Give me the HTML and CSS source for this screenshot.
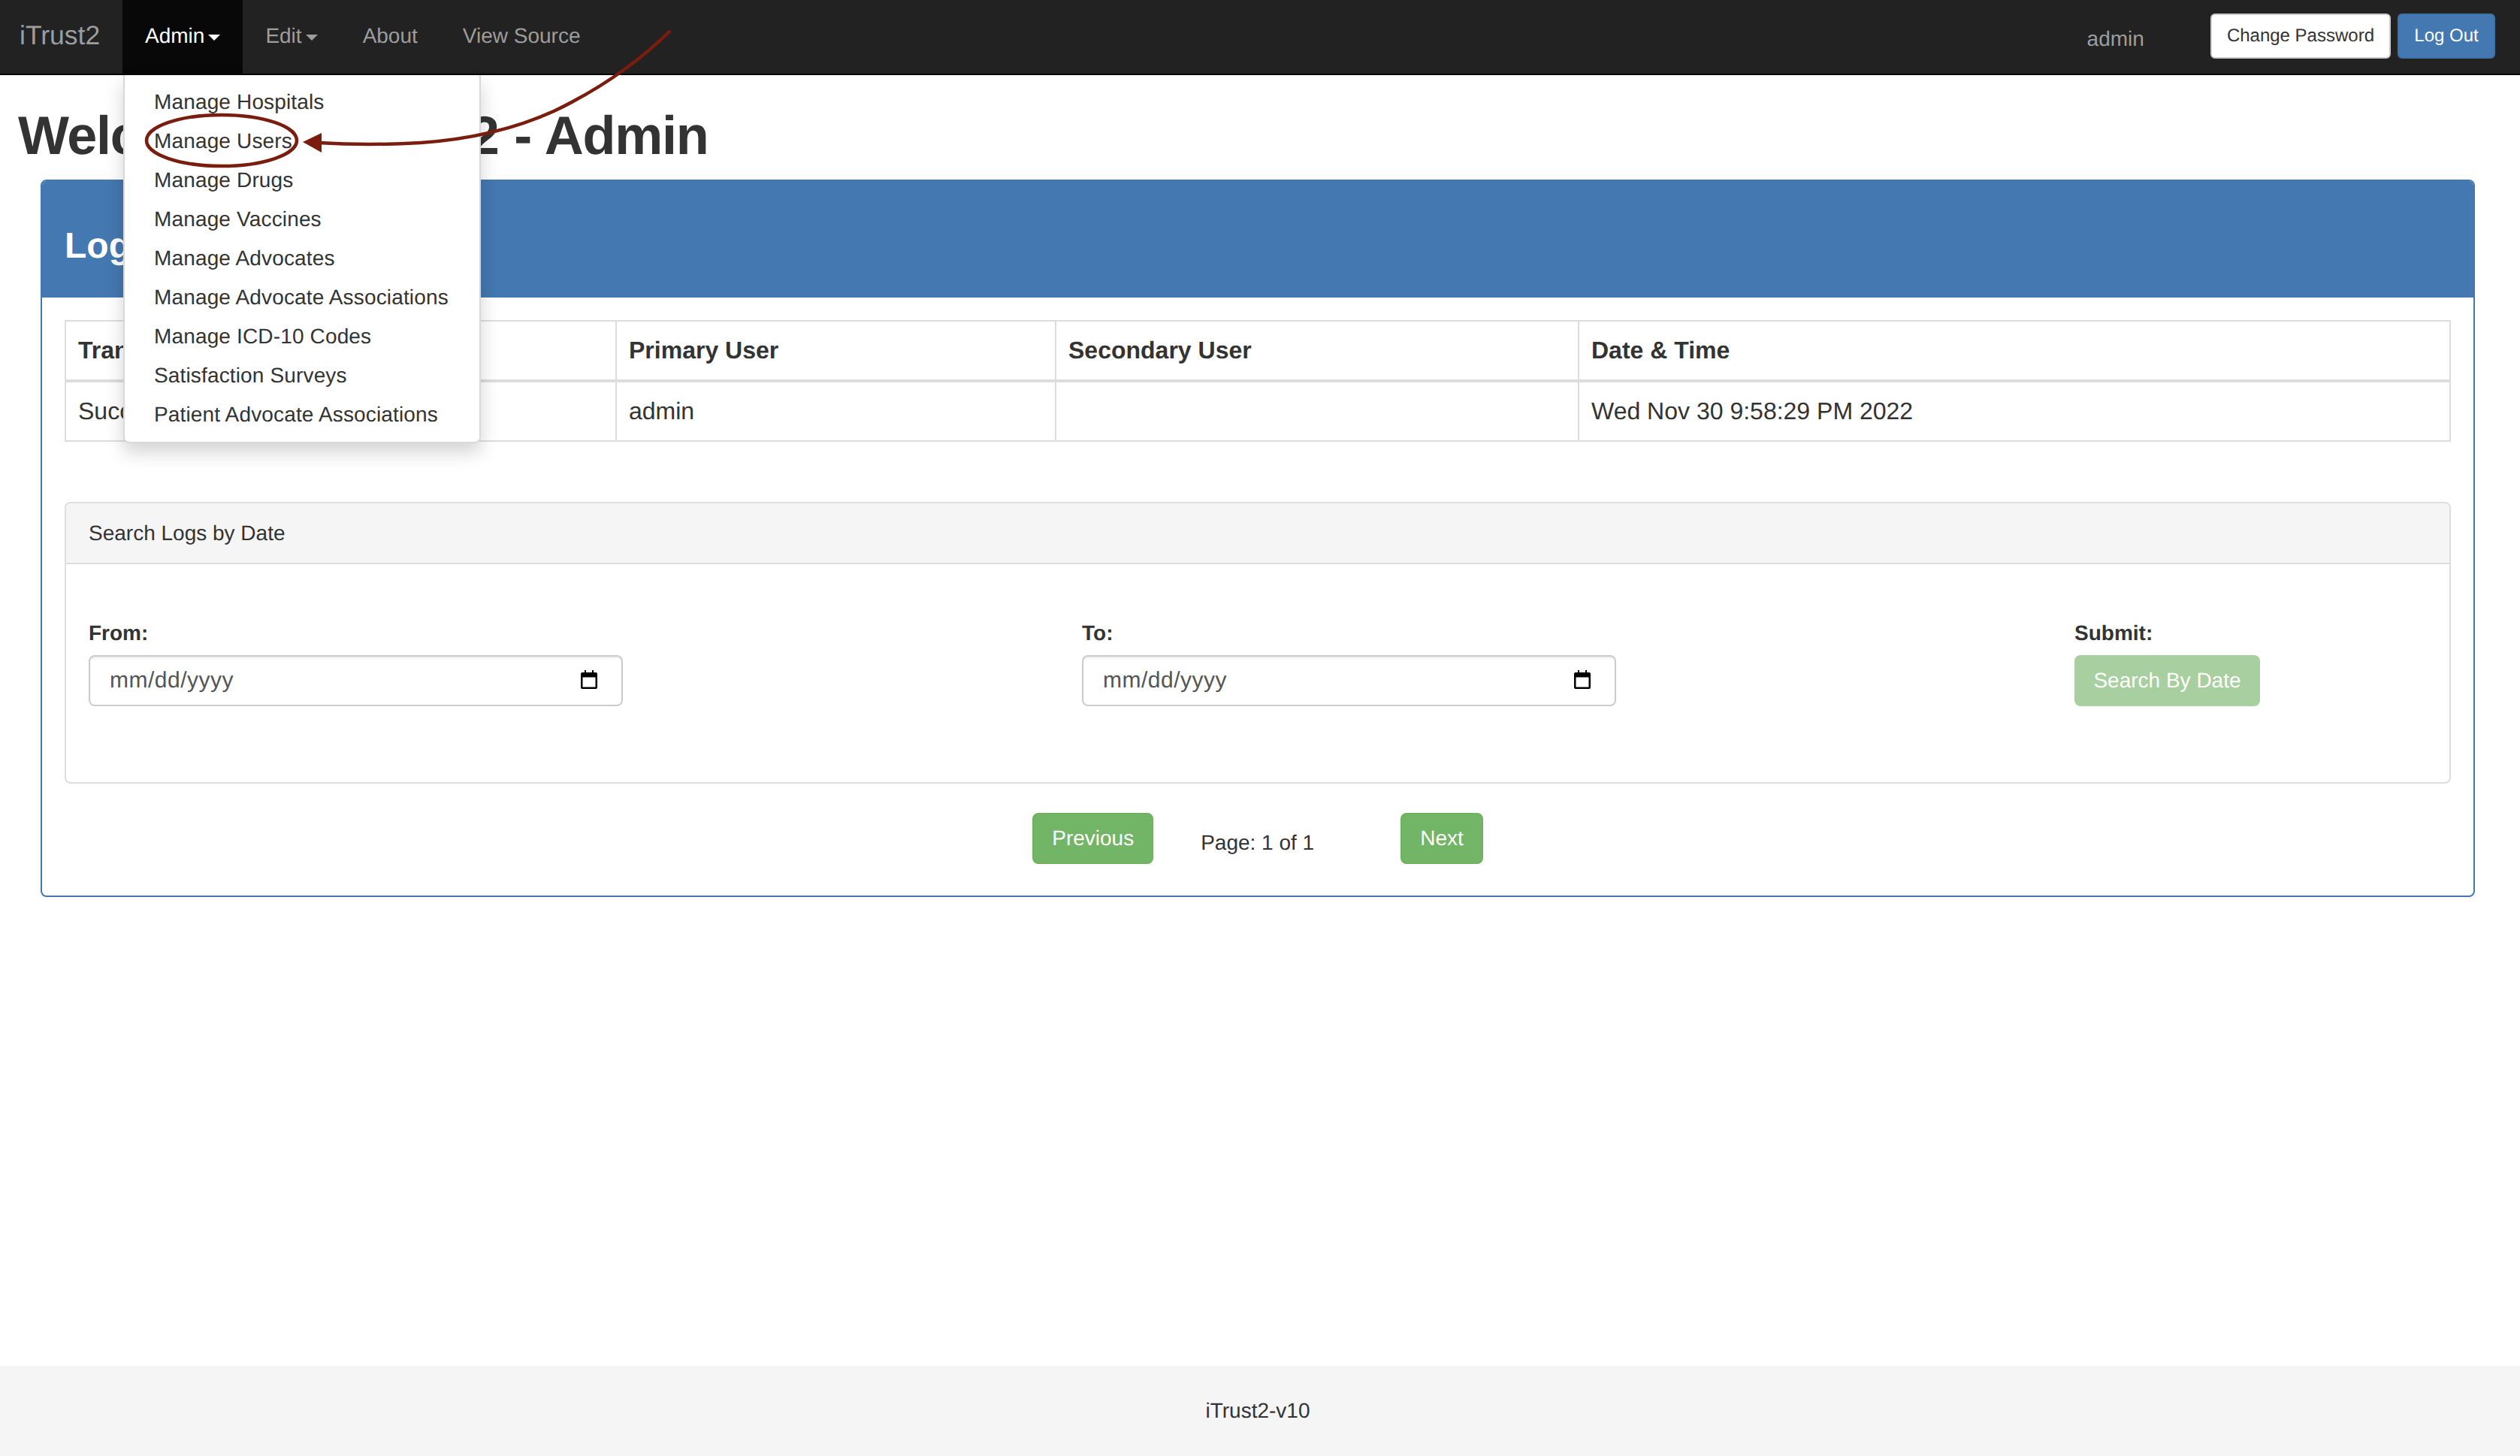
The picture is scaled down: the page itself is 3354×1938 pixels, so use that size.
FILE: index.html
```html
<!DOCTYPE html>
<html lang="en">
<head>
<meta charset="utf-8">
<title>iTrust2</title>
<link rel="stylesheet" href="styles.css">
</head>
<body>
<nav class="navbar">
  <a class="brand">iTrust2</a>
  <ul class="nav">
    <li class="nav-item active dropdown">
      <a class="nav-link">Admin<span class="caret"></span></a>
      <ul class="menu">
        <li>Manage Hospitals</li>
        <li>Manage Users</li>
        <li>Manage Drugs</li>
        <li>Manage Vaccines</li>
        <li>Manage Advocates</li>
        <li>Manage Advocate Associations</li>
        <li>Manage ICD-10 Codes</li>
        <li>Satisfaction Surveys</li>
        <li>Patient Advocate Associations</li>
      </ul>
    </li>
    <li class="nav-item"><a class="nav-link">Edit<span class="caret"></span></a></li>
    <li class="nav-item"><a class="nav-link">About</a></li>
    <li class="nav-item"><a class="nav-link">View Source</a></li>
  </ul>
  <div class="nav-right">
    <span class="nav-user">admin</span>
    <button class="btn btn-default">Change Password</button>
    <button class="btn btn-primary">Log Out</button>
  </div>
</nav>

<main class="content">
  <h1 class="title">Welcome to iTrust2 - Admin</h1>
  <section class="panel">
    <header class="panel-heading"><h3>Logs</h3></header>
    <div class="panel-body">
      <table class="log-table">
        <colgroup>
          <col class="col-type"><col class="col-primary"><col class="col-secondary"><col>
        </colgroup>
        <thead>
          <tr><th>Transaction Type</th><th>Primary User</th><th>Secondary User</th><th>Date &amp; Time</th></tr>
        </thead>
        <tbody>
          <tr><td>Successful Login</td><td>admin</td><td></td><td>Wed Nov 30 9:58:29 PM 2022</td></tr>
        </tbody>
      </table>

      <section class="search">
        <div class="search-heading">Search Logs by Date</div>
        <div class="search-body">
          <div class="field">
            <label class="field-label">From:</label>
            <div class="date-input">
              <span class="date-text">mm/dd/yyyy</span>
              <svg class="cal" viewBox="0 0 22 25" aria-hidden="true"><path d="M5 0h2v4H5zM15 0h2v4h-2z" fill="#000"/><path d="M2 3h18a2 2 0 0 1 2 2v18a2 2 0 0 1-2 2H2a2 2 0 0 1-2-2V5a2 2 0 0 1 2-2zm.5 6.5v13h17v-13z" fill="#000" fill-rule="evenodd"/></svg>
            </div>
          </div>
          <div class="field">
            <label class="field-label">To:</label>
            <div class="date-input">
              <span class="date-text">mm/dd/yyyy</span>
              <svg class="cal" viewBox="0 0 22 25" aria-hidden="true"><path d="M5 0h2v4H5zM15 0h2v4h-2z" fill="#000"/><path d="M2 3h18a2 2 0 0 1 2 2v18a2 2 0 0 1-2 2H2a2 2 0 0 1-2-2V5a2 2 0 0 1 2-2zm.5 6.5v13h17v-13z" fill="#000" fill-rule="evenodd"/></svg>
            </div>
          </div>
          <div class="field">
            <label class="field-label">Submit:</label>
            <button class="btn-green btn-disabled">Search By Date</button>
          </div>
        </div>
      </section>

      <div class="pager">
        <button class="btn-green">Previous</button>
        <span class="page-info">Page: 1 of 1</span>
        <button class="btn-green">Next</button>
      </div>
    </div>
  </section>
</main>

<footer class="footer">iTrust2-v10</footer>

<svg class="annotation" viewBox="0 0 1000 260" aria-hidden="true">
  <ellipse cx="295" cy="187" rx="100" ry="34" fill="none" stroke="#7b1d0e" stroke-width="4.5"/>
  <path d="M892 41Q827 105 737 148Q660 183 560 190Q490 194 424 190" fill="none" stroke="#7b1d0e" stroke-width="4.5"/>
  <path d="M403 189L428 177V203Z" fill="#7b1d0e"/>
</svg>
</body>
</html>
```
FILE: styles.css
```css
* { box-sizing: border-box; }
html, body { margin: 0; padding: 0; }
body {
  position: relative;
  display: flex;
  flex-direction: column;
  height: 1938px;
  overflow: hidden;
  font-family: "Liberation Sans", Arial, sans-serif;
  font-size: 28px;
  color: #333;
  background: #fff;
  text-rendering: geometricPrecision;
}

/* navbar */
.navbar {
  display: flex;
  align-items: stretch;
  height: 100px;
  background: #222;
  border-bottom: 2px solid #000;
  padding-right: 33px;
}
.brand {
  width: 163px;
  padding: 25px 0 0 26px;
  font-size: 35.5px;
  line-height: 44px;
  color: #9d9d9d;
}
.nav { display: flex; list-style: none; margin: 0; padding: 0; }
.nav-item { position: relative; height: 100px; }
.nav-link {
  display: block;
  padding: 28px 30px 0;
  line-height: 40px;
  color: #9d9d9d;
}
.active .nav-link { background: #080808; color: #fff; height: 100px; }
.caret {
  display: inline-block;
  margin-left: 5px;
  vertical-align: middle;
  border-top: 8px solid;
  border-left: 8px solid transparent;
  border-right: 8px solid transparent;
}
.nav-right { display: flex; align-items: flex-start; margin-left: auto; padding-top: 18px; }
.nav-user { margin-right: 88px; padding-top: 14px; line-height: 40px; color: #9d9d9d; }
.btn {
  height: 60px;
  padding: 0 20px;
  border: 2px solid;
  border-radius: 6px;
  font: 24px "Liberation Sans", Arial, sans-serif;
  text-rendering: geometricPrecision;
}
.btn-default { background: #fff; border-color: #ccc; color: #333; }
.btn-primary { margin-left: 9px; width: 130px; background: #4478b0; border-color: #3f72a8; color: #fff; }

/* dropdown */
.menu {
  position: absolute;
  top: 100px;
  left: 1px;
  z-index: 10;
  width: 476px;
  margin: 0;
  padding: 10px 0;
  list-style: none;
  background: #fff;
  border: 2px solid rgba(0, 0, 0, .15);
  border-top: 0;
  border-radius: 0 0 8px 8px;
  box-shadow: 0 12px 24px rgba(0, 0, 0, .175);
}
.menu li { padding: 0 39px; line-height: 52px; height: 52px; letter-spacing: .15px; color: #333; white-space: nowrap; }

/* content */
.content { padding: 0 60px 0 54px; }
.title {
  margin: 42px 0 18px -30px;
  font-size: 72px;
  line-height: 79px;
  font-weight: bold;
  letter-spacing: -1.3px;
  word-spacing: 2px;
  color: #333;
}
.panel {
  height: 955px;
  background: #fff;
  border: 2px solid #4478b0;
  border-radius: 8px;
}
.panel-heading { height: 155px; padding: 60px 30px 0; background: #4478b0; border-radius: 6px 6px 0 0; }
.panel-heading h3 { margin: 0; font-size: 48px; line-height: 54px; font-weight: bold; color: #fff; }
.panel-body { padding: 30px 30px 0; }

.log-table { width: 3176px; border-collapse: collapse; table-layout: fixed; font-size: 32px; }
.col-type { width: 733px; }
.col-primary { width: 585px; }
.col-secondary { width: 696px; }
.log-table th, .log-table td { padding: 16px; border: 2px solid #ddd; line-height: 45px; text-align: left; white-space: nowrap; overflow: hidden; }
.log-table th { border-bottom-width: 4px; font-weight: bold; }

/* search */
.search { height: 375px; margin-top: 80px; border: 2px solid #ddd; border-radius: 8px; }
.search-heading {
  height: 81px;
  padding: 0 30px;
  line-height: 80px;
  background: #f5f5f5;
  border-bottom: 2px solid #ddd;
  border-radius: 6px 6px 0 0;
}
.search-body {
  display: grid;
  grid-template-columns: 1322px 1321px 1fr;
  padding: 72px 30px 0;
}
.field-label { display: block; margin-bottom: 9px; font-weight: bold; line-height: 40px; }
.date-input {
  display: flex;
  align-items: center;
  justify-content: space-between;
  width: 711px;
  height: 68px;
  padding: 0 32px 0 26px;
  border: 2px solid #ccc;
  border-radius: 8px;
  box-shadow: inset 0 2px 2px rgba(0, 0, 0, .075);
}
.date-text { font-size: 30px; color: #555; letter-spacing: .5px; }
.cal { width: 22px; height: 25px; margin-top: -4px; }
.btn-green {
  height: 68px;
  padding: 0 24px;
  border: 2px solid #6fb15f;
  border-radius: 8px;
  background: #72b566;
  color: #fff;
  font: 28px "Liberation Sans", Arial, sans-serif;
  text-rendering: geometricPrecision;
}
.btn-disabled { background: #a8cf9f; border-color: #a8cf9f; width: 247px; padding: 0; }

/* pager */
.pager { display: flex; justify-content: center; align-items: flex-start; margin-top: 39px; }
.page-info { margin: 20px 115px 0 63px; line-height: 40px; }

/* footer */
.footer {
  margin-top: auto;
  flex: none;
  height: 120px;
  padding: 40px 6px 0 0;
  line-height: 40px;
  text-align: center;
  background: #f5f5f5;
}

/* hand-drawn annotation over the screenshot */
.annotation {
  position: absolute;
  top: 0;
  left: 0;
  z-index: 20;
  width: 1000px;
  height: 260px;
  pointer-events: none;
}
```
